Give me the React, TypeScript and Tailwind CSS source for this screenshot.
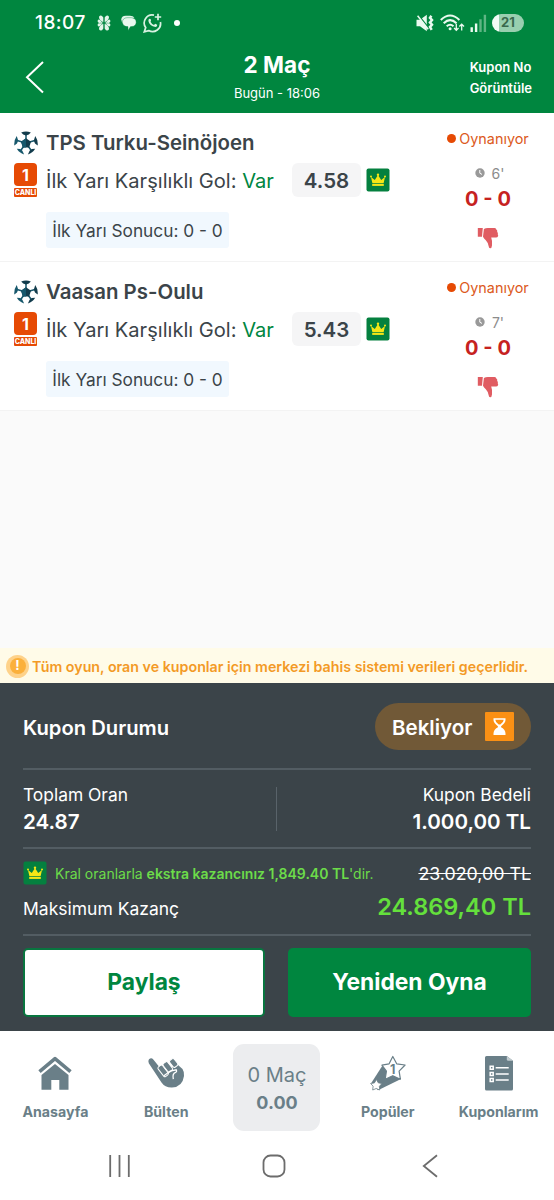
import React from 'react';

const MATCHES = [
  { id: 1, name: 'TPS Turku-Seinöjoen', odds: '4.58', minute: "6'", score: '0 - 0' },
  { id: 2, name: 'Vaasan Ps-Oulu', odds: '5.43', minute: "7'", score: '0 - 0' },
];

const CrownIcon: React.FC = () => (
  <svg width="24" height="24" viewBox="0 0 24 24" className="shrink-0">
    <rect x=".5" y=".5" width="23" height="23" rx="2" fill="#04803f" />
    <path d="M6.4 15.2 5 9l3.800 3L12 7l3.200 5L19 9l-1.400 6.200z" fill="#f5e616" />
    <rect x="6.2" y="16" width="11.6" height="1.9" fill="#f5e616" />
    <circle cx="5" cy="8.600" r="1" fill="#f5e616" />
    <circle cx="12" cy="6.800" r="1.200" fill="#f5e616" />
    <circle cx="19" cy="8.600" r="1" fill="#f5e616" />
  </svg>
);

const BallIcon: React.FC = () => (
  <svg width="24" height="24" viewBox="0 0 24 24" className="shrink-0">
    <g stroke="#17586c" strokeWidth="1.5">
      <path d="M12 12V3M12 12l9-2.500M12 12l5.600 8M12 12l-5.600 8M12 12 3 9.500" />
    </g>
    <path d="m12 7.200 5 3.600-1.900 5.800H8.900L7 10.800z" fill="#123c4c" />
    <path d="m12 7.200-5 3.600 1.900 5.800H12z" fill="#17586c" />
    <path d="M7.200 1.400q4.800-1.700 9.600 0L14.800 3.500l-2.800.9-2.800-.9z" fill="#123c4c" />
    <path d="M21.300 5q2.900 4.300 2.400 9.600L21 12.500l-1.200-3z" fill="#123c4c" />
    <path d="M2.700 5Q-.2 9.300.3 14.600L3 12.500l1.200-3z" fill="#17586c" />
    <path d="M21.200 17.800q-2.600 4.400-7.300 5.600l1.700-3.700 2.300-1.600z" fill="#123c4c" />
    <path d="M2.800 17.800q2.600 4.400 7.300 5.600l-1.700-3.700-2.300-1.600z" fill="#17586c" />
  </svg>
);

const ThumbDownIcon: React.FC = () => (
  <svg width="22" height="22" viewBox="0 0 22 22" fill="#e05c62">
    <path d="M.8 1h5L5 9.700H.8z" />
    <path d="M6.900 1.900Q8.500.9 10.800.9h6.800q1.700.1 1.700 1.700 1.400.7.900 2.300 1.200.8.500 2.400.8.800.3 1.900-.4 1.400-2 1.400h-4.800q1.300 3.400.8 7.900-.2 2.700-1.900 2.700-1.200 0-1.500-2.200-.6-3.400-2.800-5.700Q6.800 11.600 6 9.700z" />
  </svg>
);

const StatusBar: React.FC = () => (
  <div className="flex h-[46px] items-center justify-between pl-[35px] pr-[30px]">
    <div className="flex items-center">
      <span className="w-[52px] whitespace-nowrap text-[19px] font-medium tracking-[0.5px]">18:07</span>
      <svg className="ml-[10px]" width="14" height="18" viewBox="0 0 14 18" fill="#e2f5e9">
        <path d="M6.300 8.200Q1.800 6.300 2 2.800 4-.4 6.300 3.600zM7.700 8.200q4.500-1.900 4.300-5.400Q10-.4 7.700 3.600zM6.300 9.800q-4.500 1.900-4.300 5.400 2 3.200 4.300-.8zM7.700 9.800q4.500 1.900 4.300 5.400-2 3.200-4.300-.8z" />
        <path d="M5.800 9Q1.200 9.800.6 7.400.6 4.600 3 6zM8.200 9q4.600.8 5.200-1.600Q13.400 4.600 11 6zM5.800 9Q1.200 8.200.6 10.600.6 13.400 3 12zM8.200 9q4.600-.8 5.200 1.600 0 2.800-2.400 1.400z" />
      </svg>
      <svg className="ml-[9px]" width="17" height="18" viewBox="0 0 17 18">
        <path d="M2.200 8.700Q-.6 2.300 5.800 1.800H10q3 0 4.400 1.600" fill="#e2f5e9" />
        <path d="M7 3.700h4.200q5 .3 5 4.600-.2 4-4.600 4.300h-1l-2.600 3.800v-3.800H7q-4.400-.3-4.600-4.500.2-4 4.600-4.400z" fill="#e9f8ee" stroke="#00863f" strokeWidth="0.4" />
      </svg>
      <svg className="ml-[6px]" width="19" height="20" viewBox="0 0 19 20" fill="none" stroke="#d9f2e2" strokeWidth="1.7">
        <path d="M11 2.200A8 8 0 0 0 2.700 14.600L1.300 18.800l4.400-1.200A8 8 0 0 0 17.400 9" />
        <path d="M15 .8v6.400M11.800 4H18.200" />
        <path d="M6 6.100q1.300-1.200 1.900.7.400 1.300-.4 2 1.200 2.400 3.500 3.200l1.200-1.200 2 .9q.3 1.900-1.600 2.200Q6.200 13.200 5.400 8 5.400 6.700 6 6.100z" fill="#d9f2e2" stroke="none" />
      </svg>
      <span className="ml-[12px] h-[6px] w-[6px] rounded-full bg-white" />
    </div>
    <div className="flex items-center">
      <svg width="18" height="18" viewBox="0 0 18 18">
        <path d="M.5 5.800H4L10.800.8v16.400L4 12.200H.5z" fill="#eafaf0" />
        <path d="m2.500 1.200 10 12.500" stroke="#00863f" strokeWidth="1.4" />
        <path d="m1.600 1.800 10.600 13.500" stroke="#eafaf0" strokeWidth="1.5" />
        <path d="m15.400 1.800-1.400 2 2 2.200-2 2.400 2 2.300-2 2.300 1.700 2.800" fill="none" stroke="#eafaf0" strokeWidth="2.5" />
      </svg>
      <svg className="ml-[6px]" width="25" height="18" viewBox="0 0 25 18" fill="none" stroke="#eafaf0" strokeWidth="2">
        <path d="M.8 6q9.300-9 18.600 0M3.700 9.300q6.400-6.300 12.800 0M6.700 12.300q3.400-3.200 6.800 0" />
        <circle cx="10.1" cy="14.8" r="1.5" fill="#eafaf0" stroke="none" />
        <path d="M16.300 9.800v6.400m-2.200-2.200 2.200 2.400 2.200-2.400M21.700 16.500v-6m-2.300 2 2.300-2.400 2.300 2.400" strokeWidth="1.3" />
      </svg>
      <svg className="ml-[5px]" width="17" height="18" viewBox="0 0 17 18">
        <path d="M.5 13.200h2.400V18H.5zM4.900 9.400h2.400V18H4.900z" fill="#eafaf0" />
        <path d="M9.300 5.200h2.400V18H9.300zM13.700.8h2.400V18h-2.400z" fill="#5fb584" />
      </svg>
      <div className="ml-[5px] flex h-[18px] w-[32px] items-center justify-center rounded-full bg-[linear-gradient(to_right,#f1fbf5_21%,#98cfaf_21%)] text-[13px] font-bold text-[#39694d]">21</div>
    </div>
  </div>
);

const Header: React.FC = () => (
  <header className="h-[113px] bg-[#00863f] text-white">
    <StatusBar />
    <div className="grid h-[67px] grid-cols-[1fr_auto_1fr] px-[22px]">
      <svg className="ml-[3px] mt-[14px]" width="20" height="34" viewBox="0 0 20 34" fill="none" stroke="#fff" strokeWidth="2">
        <path d="M18 2 2 17.300 18 32.500" />
      </svg>
      <div className="pt-[4px] text-center">
        <h1 className="text-[22.5px] font-bold leading-[30px]">2 Maç</h1>
        <p className="text-[13px] leading-[26px]">Bugün - 18:06</p>
      </div>
      <div className="justify-self-end pt-[11px] text-[13px] font-semibold leading-[21px]">
        <div>Kupon No</div>
        <div>Görüntüle</div>
      </div>
    </div>
  </header>
);

const MatchRow: React.FC<{ match: typeof MATCHES[0] }> = ({ match }) => (
  <div className="flex h-[149px] border-b border-[#f3f3f3] bg-white pl-[14px]">
    <div className="flex-1 pt-4">
      <div className="flex h-7 items-center gap-[8px]">
        <BallIcon />
        <h2 className="pt-px text-[20.4px] font-semibold text-[#3b4449]">{match.name}</h2>
      </div>
      <div className="mt-[6px] flex h-[34px] items-center text-[#3b4449]">
        <div className="flex w-[23px] flex-col gap-[2px] text-white">
          <div className="flex h-[23px] items-center justify-center rounded bg-[#e64a04] text-[16px] font-bold">1</div>
          <div className="flex h-[9px] items-center justify-center rounded-[1px] bg-[#e64a04] text-[7px] font-extrabold leading-none">CANLI</div>
        </div>
        <div className="ml-[9px] w-[246px] whitespace-nowrap pt-[2px] text-[20.1px]">
          İlk Yarı Karşılıklı Gol: <span className="text-[#00863f]">Var</span>
        </div>
        <div className="flex h-[34px] w-[69px] items-center justify-center rounded-md bg-[#f5f5f6] pt-[2px] text-[20.5px] font-semibold">{match.odds}</div>
        <div className="ml-[5px]">
          <CrownIcon />
        </div>
      </div>
      <div className="ml-8 mt-[15px] flex h-[36px] w-[183px] items-center justify-center whitespace-nowrap rounded-[3px] bg-[#f1f8fe] pt-[2px] text-[17.3px] text-[#3b4449]">
        İlk Yarı Sonucu: 0 - 0
      </div>
    </div>
    <div className="mr-[11px] flex w-[110px] flex-col items-center pt-[16px]">
      <div className="flex h-5 items-center gap-[3px] text-[14.4px] text-[#dc5a1c]">
        <span className="mb-[2px] h-[9px] w-[9px] rounded-full bg-[#e64a04]" />
        Oynanıyor
      </div>
      <div className="mt-[14px] flex h-5 items-center gap-[7px] pl-[3px] text-[14px] text-[#8c8c8c]">
        <svg width="10" height="10" viewBox="0 0 10 10">
          <circle cx="5" cy="5" r="4.7" fill="#999" />
          <path d="M4.800 2v3.200L7 6.400" stroke="#fff" fill="none" />
        </svg>
        {match.minute}
      </div>
      <div className="mt-[4px] text-[20px] font-bold leading-6 text-[#c6221f]">{match.score}</div>
      <div className="mt-[16px]">
        <ThumbDownIcon />
      </div>
    </div>
  </div>
);

const Notice: React.FC = () => (
  <div className="flex h-[35px] items-center bg-[#fffbe8] pl-[6px] pt-px">
    <div className="flex h-[23px] w-[23px] items-center justify-center rounded-full bg-[#fed28a]">
      <div className="flex h-[16px] w-[16px] items-center justify-center rounded-full bg-[#fbb03b] text-[13px] font-bold text-white">!</div>
    </div>
    <p className="ml-[3px] whitespace-nowrap pt-px text-[14.25px] font-semibold text-[#f39a26]">
      Tüm oyun, oran ve kuponlar için merkezi bahis sistemi verileri geçerlidir.
    </p>
  </div>
);

const CouponSummary: React.FC = () => (
  <section className="h-[348px] bg-[#3b4449] px-[23px] pt-[20px] text-white">
    <div className="flex h-[47px] items-center justify-between">
      <h3 className="pt-[3px] text-[20.2px] font-semibold">Kupon Durumu</h3>
      <div className="flex h-[47px] w-[156px] items-center justify-between rounded-full bg-[#715937] pl-[17px] pr-[17px] text-[20.5px] font-semibold">
        <span className="pt-[3px]">Bekliyor</span>
        <svg width="29" height="29" viewBox="0 0 29 29">
          <rect width="29" height="29" rx="1" fill="#fb9014" />
          <path d="M8.500 6.200h12v1.900q0 3-4.400 6.100v1.100q4.400 2.500 4.400 6.200v1.400h-12v-1.400q0-3.700 4.400-6.200v-1.100Q8.500 11.100 8.500 8.100z" fill="#fff" />
          <path d="M10.300 7.700h8.400q0 2.500-3.400 4.800h-1.600q-3.400-2.300-3.400-4.800z" fill="#fb9014" />
        </svg>
      </div>
    </div>
    <div className="mt-[18px] flex h-[81px] items-center justify-between border-y-2 border-[#535d63]">
      <div className="w-[200px] pb-[2px]">
        <div className="text-[17.4px] leading-[27px]">Toplam Oran</div>
        <div className="text-[20.6px] font-semibold leading-[27px]">24.87</div>
      </div>
      <div className="mr-px h-[44px] w-px bg-[#59636a]" />
      <div className="w-[200px] pb-[2px] text-right">
        <div className="text-[17.4px] leading-[27px]">Kupon Bedeli</div>
        <div className="text-[20.6px] font-semibold leading-[27px]">1.000,00 TL</div>
      </div>
    </div>
    <div className="h-[87px] border-b-2 border-[#535d63] pt-[8px]">
      <div className="flex h-8 items-center justify-between">
        <div className="flex items-center gap-[8px] whitespace-nowrap text-[14px] text-[#6cdc49]">
          <CrownIcon />
          <span>Kral oranlarla <b className="font-semibold">ekstra kazancınız 1,849.40 TL</b>'dir.</span>
        </div>
        <span className="pt-[2px] text-[17.8px] line-through">23.020,00 TL</span>
      </div>
      <div className="flex h-[36px] items-center justify-between">
        <span className="pt-[4px] text-[17.5px]">Maksimum Kazanç</span>
        <span className="text-[23.5px] font-semibold text-[#64e03c]">24.869,40 TL</span>
      </div>
    </div>
    <div className="mt-[12px] flex justify-between text-[22.8px] font-bold">
      <button className="h-[69px] w-[242px] rounded-[5px] border-2 border-[#08753f] bg-white text-[#00863f]">Paylaş</button>
      <button className="h-[69px] w-[243px] rounded-[5px] bg-[#00863f]">Yeniden Oyna</button>
    </div>
  </section>
);

const HomeIcon = () => (
  <svg width="36" height="36" viewBox="0 0 36 36" fill="#6a7f88">
    <path d="m2.500 16.700 15.500-13 15.500 13" fill="none" stroke="#6a7f88" strokeWidth="3.6" strokeLinejoin="round" />
    <path d="M18 9 31.500 20v14.700h-9.200v-9.800h-8v9.800H4.500V20z" />
  </svg>
);

// Fist with the little finger raised
const HandIcon = () => (
  <svg width="38" height="36" viewBox="0 0 38 36" fill="#6a7f88">
    <path d="M2 4.200Q4.300 2 6.300 4.400l9.700 12.200L31 10l4.500 4q1.800 2.500 1.500 7-1.500 11-12 11.500-7 .2-10.500-5L1.800 8.200Q.8 5.800 2 4.200z" />
    <g stroke="#fff" strokeWidth="1">
      <rect x="13.4" y="10" width="5.6" height="12" rx="1.6" transform="rotate(-38 16 16)" />
      <rect x="18.1" y="6.5" width="5.6" height="10.5" rx="1.6" transform="rotate(-38 21 12)" />
      <rect x="24" y="3.5" width="5.6" height="8.5" rx="1.6" transform="rotate(-38 27 8)" />
    </g>
    <path d="m17 20.800 6.200-4.700 6-1.300q1 1.800-.6 2.600-3.500 1-2.300 6.800" fill="none" stroke="#fff" strokeWidth="1.3" />
  </svg>
);

const PopularIcon = () => (
  <svg width="36" height="36" viewBox="0 0 36 36">
    <path d="M12.500 10.500 1.300 28 8 35.300l22.500-11z" fill="#6a7f88" />
    <path d="m22.800 1.500 3.900 7.300 8.400 1.200-6 6.200 1.300 8-7.600-3.500-7.600 3.500 1.200-8-4.500-6 7.200-1.400z" fill="#fff" stroke="#6a7f88" strokeWidth="1.2" strokeLinejoin="round" />
    <path d="m6.500 24.500 1.700 3.300 3.700.8-2.500 2.700.3 3.700-3.500-1.500L2.700 35l.4-3.800-2.500-2.700 3.800-.6z" fill="#fff" stroke="#6a7f88" strokeWidth=".8" />
    <text x="22.8" y="18.5" textAnchor="middle" fontSize="12.5" fontWeight="700" fill="#6a7f88">1</text>
  </svg>
);

const CouponsIcon = () => (
  <svg width="28" height="36" viewBox="0 0 28 36">
    <path d="M1.500 1h20.300L28 5.700V34q0 1.500-1.500 1.500h-25Q0 35.500 0 34V2.500Q0 1 1.500 1z" fill="#6a7f88" />
    <path d="M21.800 1v3.200q0 1.500 1.500 1.500H28z" fill="#c3cdd1" />
    <g stroke="#fff" strokeWidth="1.5" fill="none">
      <path d="M5.200 11.200h3v3h-3zM5.200 17.400h3v3h-3zM5.200 23.600h3v3h-3zM10.700 12.700h13M10.700 18.900h13M10.700 25.100h13" />
    </g>
  </svg>
);

const TabItem: React.FC<{ label: string; children: React.ReactNode }> = ({ label, children }) => (
  <div className="flex flex-col items-center pt-[24px]">
    <div className="flex h-[36px] items-center">{children}</div>
    <span className="mt-[10px] text-[14.2px] font-bold leading-[21px]">{label}</span>
  </div>
);

const TabBar: React.FC = () => (
  <nav className="grid h-[104px] grid-cols-5 bg-white text-[#6a7f88]">
    <TabItem label="Anasayfa"><HomeIcon /></TabItem>
    <TabItem label="Bülten"><HandIcon /></TabItem>
    <div className="flex justify-center pt-[13px]">
      <div className="flex h-[87px] w-[87px] flex-col items-center justify-center rounded-[11px] bg-[#ecedef] pt-[2px]">
        <span className="text-[20px] leading-7">0 Maç</span>
        <span className="text-[18px] font-bold leading-[27px]">0.00</span>
      </div>
    </div>
    <TabItem label="Popüler"><PopularIcon /></TabItem>
    <TabItem label="Kuponlarım"><CouponsIcon /></TabItem>
  </nav>
);

const SystemNav: React.FC = () => (
  <div className="flex h-[65px] items-start bg-white pl-[108px] pt-[19px]">
    <svg width="24" height="24" viewBox="0 0 24 24" stroke="#6c6c6c" strokeWidth="1.8">
      <path d="M2.200 1v22M11.500 1v22M20.800 1v22" />
    </svg>
    <svg className="ml-[130px]" width="24" height="24" viewBox="0 0 24 24" fill="none" stroke="#6c6c6c" strokeWidth="1.8">
      <rect x="1.5" y="1.5" width="21" height="21" rx="7" />
    </svg>
    <svg className="ml-[136px]" width="16" height="24" viewBox="0 0 16 24" fill="none" stroke="#6c6c6c" strokeWidth="1.8">
      <path d="M15 1.200 1.800 12 15 22.800" />
    </svg>
  </div>
);

const App: React.FC = () => {
  return (
    <div className="flex h-[1200px] w-[554px] flex-col overflow-hidden bg-[#fafafa] font-['Inter',sans-serif]">
      <Header />
      <main className="flex-1">
        {MATCHES.map(m => (
          <MatchRow key={m.id} match={m} />
        ))}
      </main>
      <Notice />
      <CouponSummary />
      <TabBar />
      <SystemNav />
    </div>
  );
};

export default App;
